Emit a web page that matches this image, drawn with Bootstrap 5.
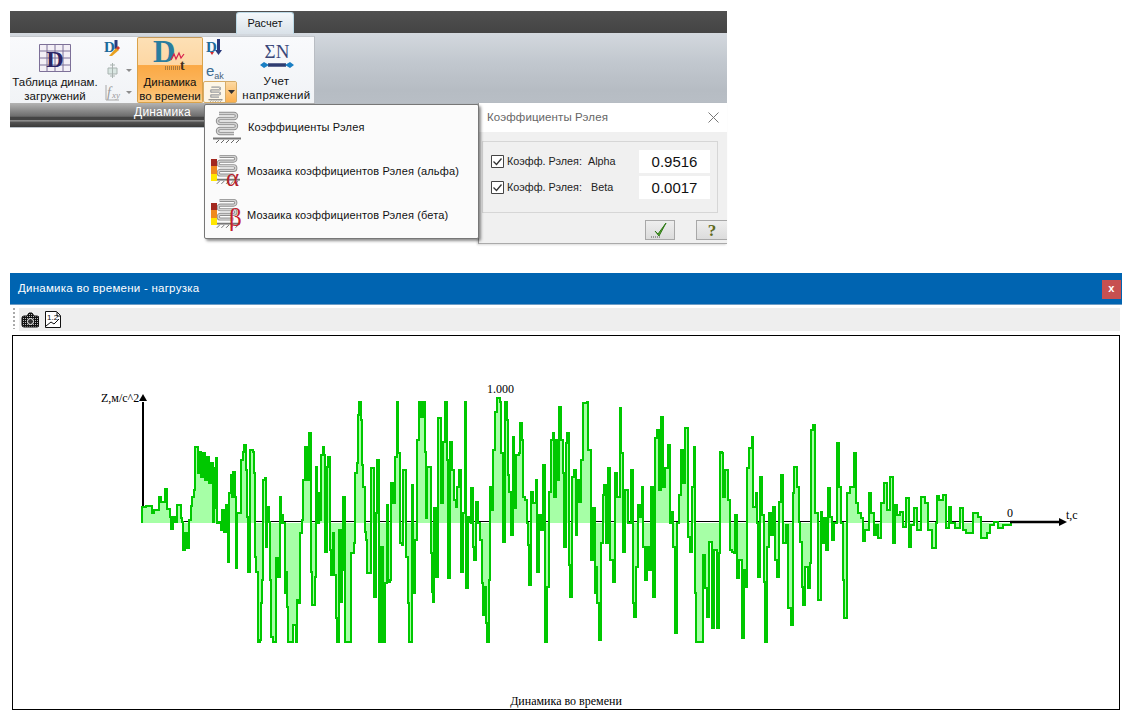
<!DOCTYPE html>
<html lang="ru">
<head>
<meta charset="utf-8">
<title>Динамика во времени</title>
<link href="https://cdn.jsdelivr.net/npm/bootstrap@5.3.0/dist/css/bootstrap.min.css" rel="stylesheet">
<style>
body{background:#fff;margin:0;padding:11px 10px 0;font-family:"Liberation Sans",Arial,sans-serif;font-size:11px;color:#000;height:719px;overflow:hidden}
.shot-top{width:717px;height:262px;position:relative}
.tab-strip{height:22px;background:linear-gradient(#505050,#444);padding-left:226px}
.tab-face{width:58px;height:22px;margin-top:1px;background:linear-gradient(#f4f8fb,#d9e1e8);border:1px solid #bcd9e6;border-bottom:0;border-radius:3px 3px 0 0;font-size:11px;line-height:21px;text-align:center;color:#111}
.rib-body{height:95px;padding-top:3px;background:linear-gradient(#d3d8de 0,#c2c8cf 30%,#b6bcc3 60%,#bcc2c9 100%)}
.rib-group{width:305px;height:92px}
.rib-panel{height:67px;background:linear-gradient(#f9fafc,#f1f3f6);border-right:1px solid #b9bdc3;border-top:1px solid #c5c9ce}
.rib-label{height:24px;background:linear-gradient(#b4b4b4,#6d6d6d 55%,#444 60%,#444 72%,#ddd 74%,#555 78%,#3a3a3a);color:#fff;font-size:12px;line-height:18px;text-align:center;letter-spacing:.2px}
.rib-big{flex:none;text-align:center;line-height:13.5px;font-size:11.5px;color:#111;display:flex;flex-direction:column;align-items:center}
.rib-big svg,.drop-row svg{overflow:visible}
.big-table{width:90px;padding-top:7px}
.big-table .big-cap{margin-top:4px}
.big-load .big-cap{margin-top:5px;letter-spacing:.35px}
.big-dyn{width:66px;padding-top:2px;background:linear-gradient(#fde0b5 0,#fdd7a4 42%,#fba945 43%,#fbb862 80%,#fcd08e 100%);border:1px solid #d9a24a;border-top-color:#c49a5b;border-radius:2px;height:66px}
.big-load{width:77px;padding-top:6px}
.big-cap{white-space:nowrap}
.big-dyn .big-cap{margin-top:3px}
.rib-smalls{flex:none;width:37px;display:flex;flex-direction:column;align-items:flex-start;padding:3px 0 0 4px;gap:2px}
.rib-smalls2{width:35px;padding:2px 0 0 3px;gap:0;color:#2c5a84}
.ek-text{font-size:15px;line-height:19px;margin-top:5px;margin-bottom:1px;color:#3c6c92}
.ek-text sub{font-size:9px;vertical-align:-1px;line-height:0;color:#46627c}
.split-btn{width:34px;height:22px;margin-left:-3px;border:1px solid #d6ac68;border-radius:2px;background:#fdf6e7;display:flex}
.split-arrow{width:11px;margin-left:auto;background:linear-gradient(#fdd9a2,#fbb04f);border-left:1px solid #d6ac68;display:flex;align-items:center;justify-content:center}
.drop-menu{position:absolute;left:194px;top:93px;width:275px;height:135px;background:#fbfbfb;border:1px solid #777;border-radius:2px;box-shadow:2px 2px 3px rgba(0,0,0,.45);z-index:3;font-size:11px;letter-spacing:.14px;color:#111}
.drop-row{height:44px;display:flex;align-items:center;gap:4px;padding-left:4px;white-space:nowrap}
.drop-row1{padding-left:8px;gap:3px}
.dlg-win{position:absolute;left:468px;top:92px;width:249px;height:141px;background:#f0f0f0;border-left:1px solid #999;border-bottom:1px solid #aaa;z-index:2;box-shadow:-1px 1px 2px rgba(0,0,0,.15)}
.dlg-title{height:29px;background:#fff;padding-left:8px;color:#666;font-size:11.5px;line-height:29px;letter-spacing:.1px}
.dlg-close{line-height:0}
.dlg-box{width:236px;height:72px;margin:9px 0 0 3px;border:1px solid #d6d6d6;padding:8px 7px 0 8px;font-size:10.8px;color:#222}
.dlg-line{height:23px;margin-bottom:3px}
.dlg-val{width:71px;height:23px;background:#fff;font-size:15px;line-height:24px;text-align:center;color:#111}
.dlg-lbl{white-space:pre;margin-left:3px}
.dlg-btns{padding:7px 0 0 166px;gap:21px}
.dlg-btn{width:30px;height:20px;background:linear-gradient(#eee,#dcdcdc);border:1px solid #a8a8a8;display:flex;align-items:center;justify-content:center}
.dlg-btn2{width:31px;border-right:0}
.plot-win{width:1112px;height:437px}
.plot-head{height:32px;background:#0064b1;border-bottom:1px solid #6d9cc5;color:#fff;font-size:11.5px;padding:0 1px 0 8px;letter-spacing:.25px}
.plot-x{width:19px;height:19px;background:#c75050;color:#fff;font-weight:bold;font-size:11px;line-height:17px;text-align:center;margin-top:2px}
.plot-tools{height:23px;margin-top:3px;padding-left:3px}
.plot-grip{width:2px;height:21px;margin-right:4px;background:repeating-linear-gradient(#aaa 0 2px,transparent 2px 4px)}
.plot-strip{width:1101px;height:23px;background:#eee;margin-right:2px;gap:6px;padding:0 0 0 2px}
.plot-frame{width:1108px;height:375px;margin:4px 0 0 2px;border:1px solid #000;display:block;background:#fff}
.plot-frame text{font-family:"Liberation Serif","Times New Roman",serif;font-size:12px;fill:#000}
</style>
</head>
<body>
<svg width="0" height="0" class="d-block position-absolute">
  <defs>
    <symbol id="spring" viewBox="0 0 28 32">
      <path d="M6 2.500H21a2.500 2.500 0 0 1 0 5H7a2.500 2.500 0 0 0 0 5H21a2.500 2.500 0 0 1 0 5H7a2.500 2.500 0 0 0 0 5H21" fill="none" stroke="#8f8f8f" stroke-width="3.400"/>
      <path d="M6 2.500H21a2.500 2.500 0 0 1 0 5H7a2.500 2.500 0 0 0 0 5H21a2.500 2.500 0 0 1 0 5H7a2.500 2.500 0 0 0 0 5H21" fill="none" stroke="#d4d4d4" stroke-width="1.400"/>
      <path d="M0 27.500h28" stroke="#777" stroke-width="2"/>
      <path d="M3 32l3-3M8 32l3-3M13 32l3-3M18 32l3-3M23 32l3-3" stroke="#666" stroke-width="1"/>
    </symbol>
    <symbol id="heat" viewBox="0 0 6 22">
      <rect width="6" height="7" fill="#a3281f"/><rect y="7" width="6" height="8" fill="#f08a1d"/><rect y="15" width="6" height="7" fill="#ffe600"/>
    </symbol>
    <pattern id="dither" width="2" height="2" patternUnits="userSpaceOnUse"><rect width="2" height="2" fill="#111"/><rect width="1" height="1" fill="#bbb"/></pattern>
  </defs>
</svg>

<section class="shot-top">
  <div class="tab-strip d-flex"><div class="tab-face">Расчет</div></div>
  <div class="rib-body">
    <div class="rib-group">
      <div class="rib-panel d-flex">
        <div class="rib-big big-table">
          <svg width="32" height="28" viewBox="0 0 32 28">
            <path d="M.5.5h31v27H.5zM.5 7h31M.5 14h31M.5 21h31M8 .5v27M16 .5v27M24 .5v27" fill="#f3eff6" stroke="#7d7098"/>
            <text x="16" y="23" text-anchor="middle" font-family="Liberation Serif" font-weight="bold" font-size="24" fill="#2b2566">D</text>
          </svg>
          <div class="big-cap">Таблица динам.<br>загружений</div>
        </div>
        <div class="rib-smalls">
          <svg width="17" height="17" viewBox="0 0 17 17"><text x="0" y="12" font-family="Liberation Serif" font-weight="bold" font-size="15" fill="#1d6a9a">D</text><path d="M12 0v9" stroke="#2a3a7c" stroke-width="3"/><path d="M5 16l7-8 3 2-7 6z" fill="#e8a020"/><path d="M12 8l2-2 2 2-2 2z" fill="#d6382c"/></svg>
          <svg class="mt-1" width="29" height="15" viewBox="0 0 29 15"><path d="M4 5h9v6H4z" fill="#d9e6e2" stroke="#a9b3b0"/><path d="M8.500 0v15M6 2h5M6 13h5" stroke="#a9b3b0"/><path d="M22 6h6l-3 3z" fill="#8c8c8c"/></svg>
          <svg class="mt-1" width="29" height="18" viewBox="0 0 29 18"><text x="3" y="13" font-family="Liberation Serif" font-style="italic" font-size="14" fill="#9a9a9a">f</text><text x="8" y="14" font-family="Liberation Serif" font-style="italic" font-size="9" fill="#9a9a9a">xy</text><path d="M2 1v15h13" fill="none" stroke="#a8a8a8"/><path d="M22 7h6l-3 3z" fill="#8c8c8c"/></svg>
        </div>
        <div class="rib-big big-dyn">
          <svg width="44" height="33" viewBox="0 0 44 33">
            <text x="5" y="22" font-family="Liberation Serif" font-weight="bold" font-size="31" fill="#2a7d9e">D</text>
            <path d="M23 20l3-6 2 5 3-6 2 5 3-4" fill="none" stroke="#d81f4c" stroke-width="1.200"/>
            <path d="M17 27h15M17 29h15" stroke="#5a4a30" stroke-dasharray="1 1"/>
            <text x="32" y="30" font-family="Liberation Serif" font-weight="bold" font-size="14" fill="#40301c">t</text>
          </svg>
          <div class="big-cap">Динамика<br>во времени</div>
        </div>
        <div class="rib-smalls rib-smalls2">
          <svg width="18" height="17" viewBox="0 0 18 17"><text x="0" y="13" font-family="Liberation Serif" font-weight="bold" font-size="15" fill="#1d6a9a">D</text><path d="M12.500 0v12" stroke="#2a3a7c" stroke-width="3"/><path d="M9 11l3.500 5 3.500-5z" fill="#2a3a7c"/><path d="M4 13h4l-2 3z" fill="#d6282c"/></svg>
          <div class="ek-text">e<sub>ak</sub></div>
          <div class="split-btn">
            <svg class="ms-1 mt-1" width="15" height="16"><use href="#spring"/></svg>
            <div class="split-arrow"><svg width="7" height="4" viewBox="0 0 7 4"><path d="M0 0h7L3.500 4z" fill="#333"/></svg></div>
          </div>
        </div>
        <div class="rib-big big-load">
          <svg width="34" height="27" viewBox="0 0 34 27">
            <text x="17" y="15" text-anchor="middle" font-family="Liberation Serif" font-size="19" fill="#3a4778">ΣN</text>
            <path d="M8 22h18" stroke="#2f3c70" stroke-width="3.500"/>
            <path d="M0 22l4-3v6zM9 22l-5-3v6zM25 22l5-3v6zM34 22l-4-3v6z" fill="#1a7fc4"/>
          </svg>
          <div class="big-cap">Учет<br>напряжений</div>
        </div>
      </div>
      <div class="rib-label">Динамика</div>
    </div>
  </div>

  <div class="drop-menu">
    <div class="drop-row drop-row1">
      <svg width="28" height="34"><use href="#spring"/></svg>
      <span class="ms-1">Коэффициенты Рэлея</span>
    </div>
    <div class="drop-row">
      <svg width="34" height="34" viewBox="0 0 34 34">
        <use href="#spring" x="5" y="0" width="26" height="30"/>
        <use href="#heat" x="2" y="5" width="6" height="22"/>
        <text x="17" y="32" font-family="Liberation Serif" font-size="25" fill="#b4232c">α</text>
      </svg>
      <span>Мозаика коэффициентов Рэлея (альфа)</span>
    </div>
    <div class="drop-row">
      <svg width="34" height="34" viewBox="0 0 34 34">
        <use href="#spring" x="5" y="0" width="26" height="30"/>
        <use href="#heat" x="2" y="5" width="6" height="22"/>
        <text x="20" y="28" font-family="Liberation Serif" font-size="25" fill="#c5202c">β</text>
      </svg>
      <span>Мозаика коэффициентов Рэлея (бета)</span>
    </div>
  </div>

  <div class="dlg-win">
    <div class="dlg-title d-flex justify-content-between align-items-center">
      <span>Коэффициенты Рэлея</span>
      <svg class="dlg-close me-2" width="11" height="11" viewBox="0 0 11 11"><path d="M.5.5l10 10M10.500.5l-10 10" stroke="#777"/></svg>
    </div>
    <div class="dlg-box">
      <div class="dlg-line d-flex align-items-center">
        <svg width="13" height="13" viewBox="0 0 13 13"><path d="M.5.500h12v12H.5z" fill="#fff" stroke="#444"/><path d="M2.500 6.500l3 3 5-6" fill="none" stroke="#333" stroke-width="1.300"/></svg>
        <span class="dlg-lbl flex-grow-1">Коэфф. Рэлея:  Alpha</span>
        <div class="dlg-val">0.9516</div>
      </div>
      <div class="dlg-line d-flex align-items-center">
        <svg width="13" height="13" viewBox="0 0 13 13"><path d="M.5.500h12v12H.5z" fill="#fff" stroke="#444"/><path d="M2.500 6.500l3 3 5-6" fill="none" stroke="#333" stroke-width="1.300"/></svg>
        <span class="dlg-lbl flex-grow-1">Коэфф. Рэлея:   Beta</span>
        <div class="dlg-val">0.0017</div>
      </div>
    </div>
    <div class="dlg-btns d-flex">
      <div class="dlg-btn"><svg width="20" height="16" viewBox="0 0 20 16"><path d="M5 9l3 3L16 1l-7 13z" fill="#5aa52c" stroke="#2f7a18" stroke-width="1"/><path d="M1 15h10" stroke="#555" stroke-dasharray="1 1"/></svg></div>
      <div class="dlg-btn dlg-btn2"><svg width="12" height="16" viewBox="0 0 12 16"><text x="6" y="13.500" text-anchor="middle" font-family="Liberation Serif" font-weight="bold" font-size="17" fill="#5f6a1c">?</text></svg></div>
    </div>
  </div>
</section>

<section class="plot-win">
  <div class="plot-head d-flex justify-content-between align-items-center">
    <span>Динамика во времени - нагрузка</span>
    <div class="plot-x">x</div>
  </div>
  <div class="plot-tools d-flex">
    <div class="plot-grip"></div>
    <div class="plot-strip d-flex align-items-center">
      <svg width="18" height="16" viewBox="0 0 18 16"><path d="M6 4l2-3h3l2 3h3q2 0 2 2v7q0 2-2 2H3q-2 0-2-2V6q0-2 2-2z" fill="url(#dither)" stroke="#111"/><circle cx="9.500" cy="9.500" r="3" fill="#333" stroke="#eee"/></svg>
      <svg width="16" height="17" viewBox="0 0 16 17"><path d="M.5.500h11l4 4v12H.5z" fill="#fff" stroke="#111"/><text x="2" y="9" font-family="Liberation Sans" font-size="8" fill="#111">1.2</text><path d="M1 15l5-4 3 2 5-5M12 1v4h3" fill="none" stroke="#111"/></svg>
    </div>
  </div>
  <svg class="plot-frame" viewBox="13 336 1106 373" width="1108" height="375">
    <path d="M141 521.500H1010" stroke="#000" stroke-width="1"/>
    <g transform="translate(130 380) scale(.33333)" fill="#a6ffa6" stroke="#00c800" stroke-linejoin="miter" shape-rendering="crispEdges">
      <polyline class="trace-line" vector-effect="non-scaling-stroke" stroke-width="2" points="37,428 37,382 48,378 65,400 72,390 82,390 88,350 93,365 104,326 112,388 120,410 124,448 130,412 136,425 142,375 148,375 152,415 156,425 158,510 163,510 165,460 170,505 176,455 178,420 182,378 186,352 192,330 196,200 200,200 203,280 208,215 214,290 220,220 226,300 232,230 238,310 244,250 248,425 252,385 254,265 258,235 262,430 268,425 272,450 276,390 282,455 288,375 292,455 295,545 298,340 302,285 305,350 310,275 314,350 318,565 322,400 328,400 332,240 338,215 343,195 347,270 352,410 355,575 360,210 368,215 372,280 374,530 378,575 383,785 390,780 392,670 397,600 400,300 405,295 408,500 412,380 418,425 420,600 423,770 428,785 434,785 438,535 443,590 450,350 452,430 458,405 460,430 464,640 466,575 472,680 475,785 490,735 497,785 500,660 507,670 510,460 516,420 520,300 524,200 530,300 536,160 540,160 542,575 545,675 552,675 555,590 558,260 562,430 566,340 570,420 574,225 578,200 582,225 586,515 590,260 595,230 600,510 604,585 608,460 612,585 618,715 622,785 626,450 632,665 636,570 640,350 645,785 660,785 664,520 672,490 675,280 680,250 684,105 688,65 692,120 695,255 700,320 704,455 708,480 712,580 718,580 722,265 728,265 732,650 738,400 742,240 746,785 752,500 758,785 764,610 770,375 774,605 780,600 784,310 790,370 795,230 800,65 805,220 810,490 815,495 820,270 825,270 828,530 833,670 838,785 844,785 846,315 850,640 856,480 860,180 866,65 872,110 880,65 884,215 888,415 892,260 898,260 902,520 906,635 909,665 912,385 918,590 924,115 930,115 934,370 940,185 945,65 950,240 954,595 960,185 966,270 972,360 978,380 982,320 988,270 994,575 998,400 1004,65 1008,625 1014,410 1020,428"/>
    </g>
    <g transform="translate(460 380) scale(.33333)" fill="#a6ffa6" stroke="#00c800" stroke-linejoin="miter" shape-rendering="crispEdges">
      <polyline class="trace-line" vector-effect="non-scaling-stroke" stroke-width="2" points="30,428 34,325 38,500 42,540 48,365 54,430 60,480 65,610 70,705 75,620 78,730 82,785 86,600 90,320 96,390 100,210 105,95 112,55 120,65 124,220 130,485 134,65 140,120 144,285 148,335 152,465 158,170 163,385 168,225 176,220 180,130 186,180 190,350 196,360 200,430 203,495 208,615 213,335 220,370 228,300 232,575 238,405 244,450 250,255 256,785 262,620 268,335 272,180 278,160 282,350 288,180 294,300 298,80 303,180 308,280 312,500 318,190 322,160 326,555 331,650 336,290 342,270 348,465 352,300 358,365 362,240 370,70 380,65 385,210 392,540 398,385 405,640 408,560 412,670 418,780 424,490 428,345 432,315 438,490 444,265 450,540 456,540 460,605 466,280 472,350 480,85 484,220 490,515 496,330 503,430 512,270 518,670 522,710 528,560 534,375 540,410 545,320 550,500 555,600 560,500 566,570 572,320 580,650 585,175 592,150 598,330 604,110 610,320 616,265 624,195 630,430 636,395 640,500 645,760 652,430 656,345 662,210 668,310 675,145 680,145 685,470 690,515 696,320 702,200 706,640 708,785 722,785 728,525 735,625 742,710 748,485 755,745 762,510 770,745 776,520 780,215 786,220 790,350 796,270 803,360 810,510 816,515 822,520 826,405 832,595 838,540 845,775 852,570 858,620 862,265 868,205 875,170 880,380 888,340 892,430 895,590 900,290 906,405 912,605 916,785 922,500 928,400 932,465 938,380 945,540 950,590 956,365 964,285 970,490 978,435 984,685 992,735 998,340 1003,260 1010,320 1018,428"/>
    </g>
    <g transform="translate(790 380) scale(.33333)" fill="#a6ffa6" stroke="#00c800" stroke-linejoin="miter" shape-rendering="crispEdges">
      <polyline class="trace-line" vector-effect="non-scaling-stroke" stroke-width="2" points="28,428 30,485 36,620 40,675 46,560 54,625 60,550 64,150 70,135 74,400 84,660 92,395 97,490 103,415 108,510 114,325 120,410 126,480 132,430 140,190 146,320 152,430 158,600 163,715 170,340 180,320 192,220 198,370 204,400 213,415 218,483 226,450 238,340 244,400 252,465 258,435 264,475 272,370 282,310 290,390 300,290 309,490 316,375 322,405 330,395 340,440 348,355 356,500 364,435 373,385 382,450 394,350 405,370 414,450 426,505 437,430 440,348 446,360 458,345 468,445 476,380 484,430 495,445 510,385 518,450 528,460 540,460 548,400 565,410 574,475 590,460 600,435 612,425 625,445 640,435 662,428"/>
    </g>
    <path d="M1010 522H1062" stroke="#000" stroke-width="2.500"/>
    <path d="M1059 518l8 4-8 4z" fill="#000"/>
    <path d="M143 402V506" stroke="#000" stroke-width="2"/>
    <path d="M143 394l-4 7h8z" fill="#000"/>
    <text x="101" y="402">Z,м/с^2</text>
    <text x="487" y="393">1.000</text>
    <text x="1007" y="517">0</text>
    <text x="1066" y="519">t,c</text>
    <text x="566" y="705" text-anchor="middle">Динамика во времени</text>
  </svg>
</section>
<script src="https://cdn.jsdelivr.net/npm/bootstrap@5.3.0/dist/js/bootstrap.bundle.min.js"></script>
<script>
/* The sampled load is a held signal: draw each sample as a step. */
document.querySelectorAll('.trace-line').forEach(function (line) {
  var pts = line.getAttribute('points').trim().split(/\s+/).map(function (p) { return p.split(','); });
  var out = [pts[0].join(',')];
  for (var i = 1; i < pts.length; i++) {
    out.push(pts[i][0] + ',' + pts[i - 1][1]);
    out.push(pts[i].join(','));
  }
  line.setAttribute('points', out.join(' '));
});
</script>
</body>
</html>
